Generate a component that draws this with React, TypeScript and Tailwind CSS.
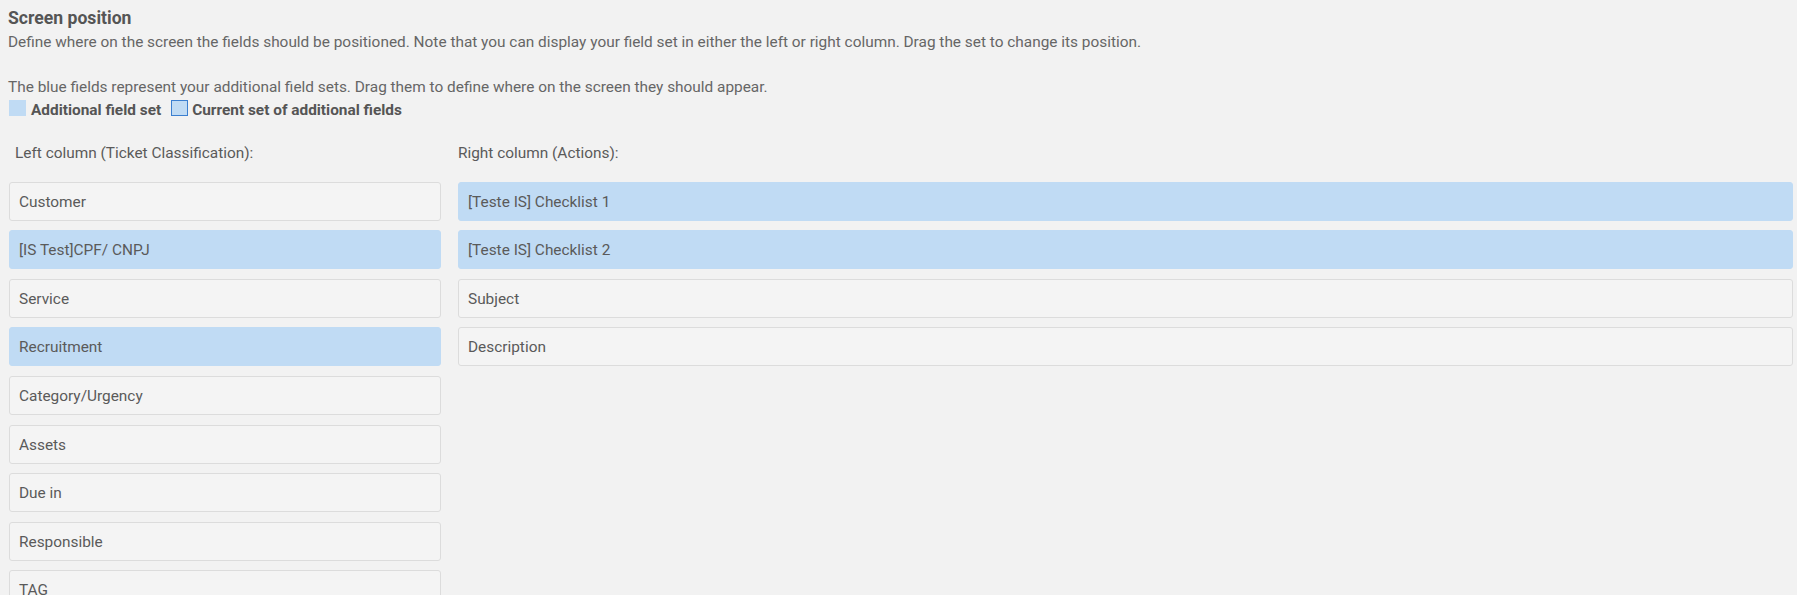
const leftFields = [
  { label: 'Customer', extra: false },
  { label: '[IS Test]CPF/ CNPJ', extra: true },
  { label: 'Service', extra: false },
  { label: 'Recruitment', extra: true },
  { label: 'Category/Urgency', extra: false },
  { label: 'Assets', extra: false },
  { label: 'Due in', extra: false },
  { label: 'Responsible', extra: false },
  { label: 'TAG', extra: false },
];

const rightFields = [
  { label: '[Teste IS] Checklist 1', extra: true },
  { label: '[Teste IS] Checklist 2', extra: true },
  { label: 'Subject', extra: false },
  { label: 'Description', extra: false },
];

function FieldBox({ label, extra }: { label: string; extra: boolean }) {
  return (
    <div
      className={
        extra
          ? 'h-[39px] shrink-0 rounded-[3px] border border-[#c0dbf4] bg-[#c0dbf4] px-[9px] pt-[2px] flex items-center text-[15.4px] text-[#5a5a5a]'
          : 'h-[39px] shrink-0 rounded-[3px] border border-[#dcdcdc] bg-[#f4f4f4] px-[9px] pt-[2px] flex items-center text-[15.4px] text-[#5a5a5a]'
      }
    >
      {label}
    </div>
  );
}

export default function App() {
  return (
    <div className="h-[595px] overflow-hidden bg-[#f2f2f2] font-['Roboto',sans-serif] text-[#5a5a5a]">
      <div className="pl-[8px] pr-[4px] pt-[7px]">
        <h3 className="h-[22px] text-[17.6px] font-bold leading-[22px] text-[#555]">Screen position</h3>
        <div className="mt-[2px] text-[15.4px] leading-[22.4px] text-[#666]">
          <p>
            Define where on the screen the fields should be positioned. Note that you can display your
            field set in either the left or right column. Drag the set to change its position.
          </p>
          <p className="h-[22.4px]"></p>
          <p>
            The blue fields represent your additional field sets. Drag them to define where on the screen
            they should appear.
          </p>
          <div className="mt-[1px] flex h-[22.4px] items-center text-[15.4px] font-bold text-[#555]">
            <span className="ml-[1px] mr-[5px] -mt-[4px] inline-block h-[16px] w-[17px] bg-[#c0dbf4]"></span>
            <span>Additional field set</span>
            <span className="ml-[10px] mr-[4px] -mt-[4px] inline-block h-[16px] w-[17px] border border-[#3b7fd0] bg-[#c0dbf4]"></span>
            <span>Current set of additional fields</span>
          </div>
        </div>

        <div className="mt-[20px] flex gap-[17px]">
          <div className="flex w-[433px] shrink-0 flex-col pl-[1px]">
            <div className="mb-[18px] h-[22px] pl-[6px] text-[15.4px] leading-[22px] text-[#5a5a5a]">
              Left column (Ticket Classification):
            </div>
            <div className="flex flex-col gap-[9.6px]">
              {leftFields.map((f) => (
                <FieldBox key={f.label} label={f.label} extra={f.extra} />
              ))}
            </div>
          </div>
          <div className="flex flex-1 flex-col">
            <div className="mb-[18px] h-[22px] text-[15.4px] leading-[22px] text-[#5a5a5a]">
              Right column (Actions):
            </div>
            <div className="flex flex-col gap-[9.6px]">
              {rightFields.map((f) => (
                <FieldBox key={f.label} label={f.label} extra={f.extra} />
              ))}
            </div>
          </div>
        </div>
      </div>
    </div>
  );
}
